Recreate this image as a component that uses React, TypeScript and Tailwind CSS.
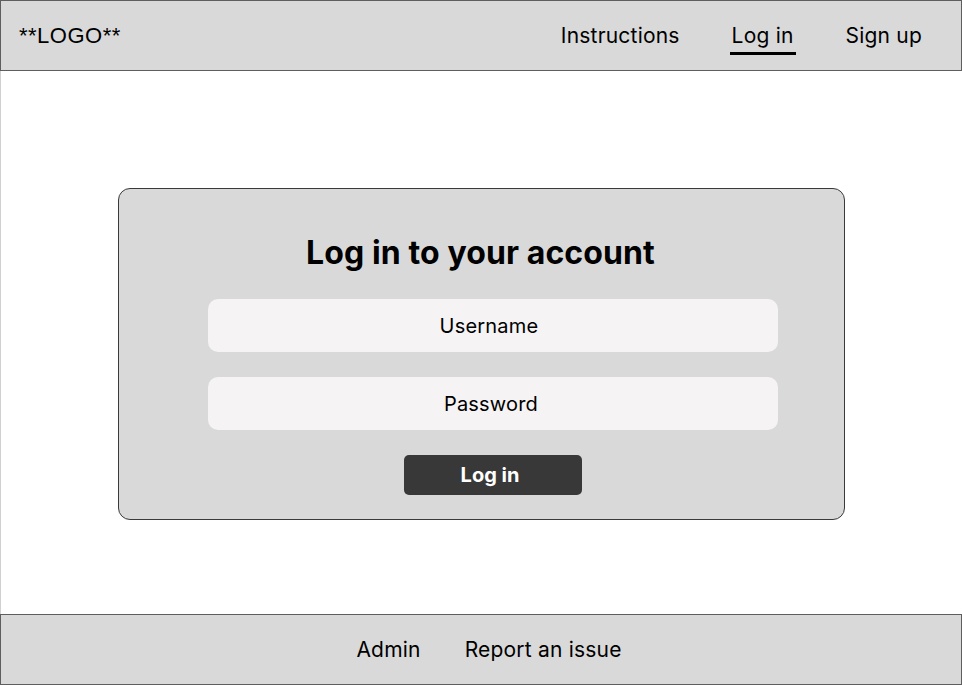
export default function App() {
  return (
    <div className="flex h-[685px] w-[962px] flex-col bg-white font-['Inter',sans-serif] text-black">
      <header className="flex h-[71px] shrink-0 items-center justify-between border border-[#5e5e5e] bg-[#d9d9d9] pl-[18px] pr-[39px]">
        <div className="font-['Liberation_Sans',Arial,sans-serif] text-[22px] leading-none tracking-[0.5px]">**LOGO**</div>
        <nav className="flex items-center gap-[52px] text-[21px] tracking-[0.2px]">
          <a className="leading-none">Instructions</a>
          <a className="relative leading-none">
            Log in
            <span className="absolute -left-[2px] -right-[2px] top-[27px] h-[3px] bg-black" />
          </a>
          <a className="leading-none">Sign up</a>
        </nav>
      </header>

      <main className="flex flex-1 items-start justify-center border-l border-[#d0d0d0] pt-[117px]">
        <div className="flex w-[727px] flex-col items-center rounded-[12px] border border-[#3a3a3a] bg-[#d9d9d9] pb-[24px] pt-[45px]">
          <h1 className="-ml-[2px] text-[32px] font-bold leading-[38px] tracking-[0.1px]">Log in to your account</h1>
          <div className="ml-[23px] flex flex-col items-center">
            <input
              placeholder="Username"
              className="mt-[27px] h-[53px] w-[570px] rounded-[10px] bg-[#f5f3f4] pr-[8px] text-center text-[20px] tracking-[0.2px] outline-none placeholder:text-black"
            />
            <input
              placeholder="Password"
              className="mt-[25px] h-[53px] w-[570px] rounded-[10px] bg-[#f5f3f4] pr-[4px] text-center text-[20px] tracking-[0.2px] outline-none placeholder:text-black"
            />
            <button className="mt-[25px] h-[40px] w-[178px] rounded-[5px] bg-[#383838] pr-[6px] text-[20px] font-bold text-white">
              Log in
            </button>
          </div>
        </div>
      </main>

      <footer className="flex h-[71px] shrink-0 items-center justify-center gap-[44px] border border-[#5e5e5e] bg-[#d9d9d9] pl-[16px] text-[21px] tracking-[0.2px]">
        <a>Admin</a>
        <a>Report an issue</a>
      </footer>
    </div>
  );
}
